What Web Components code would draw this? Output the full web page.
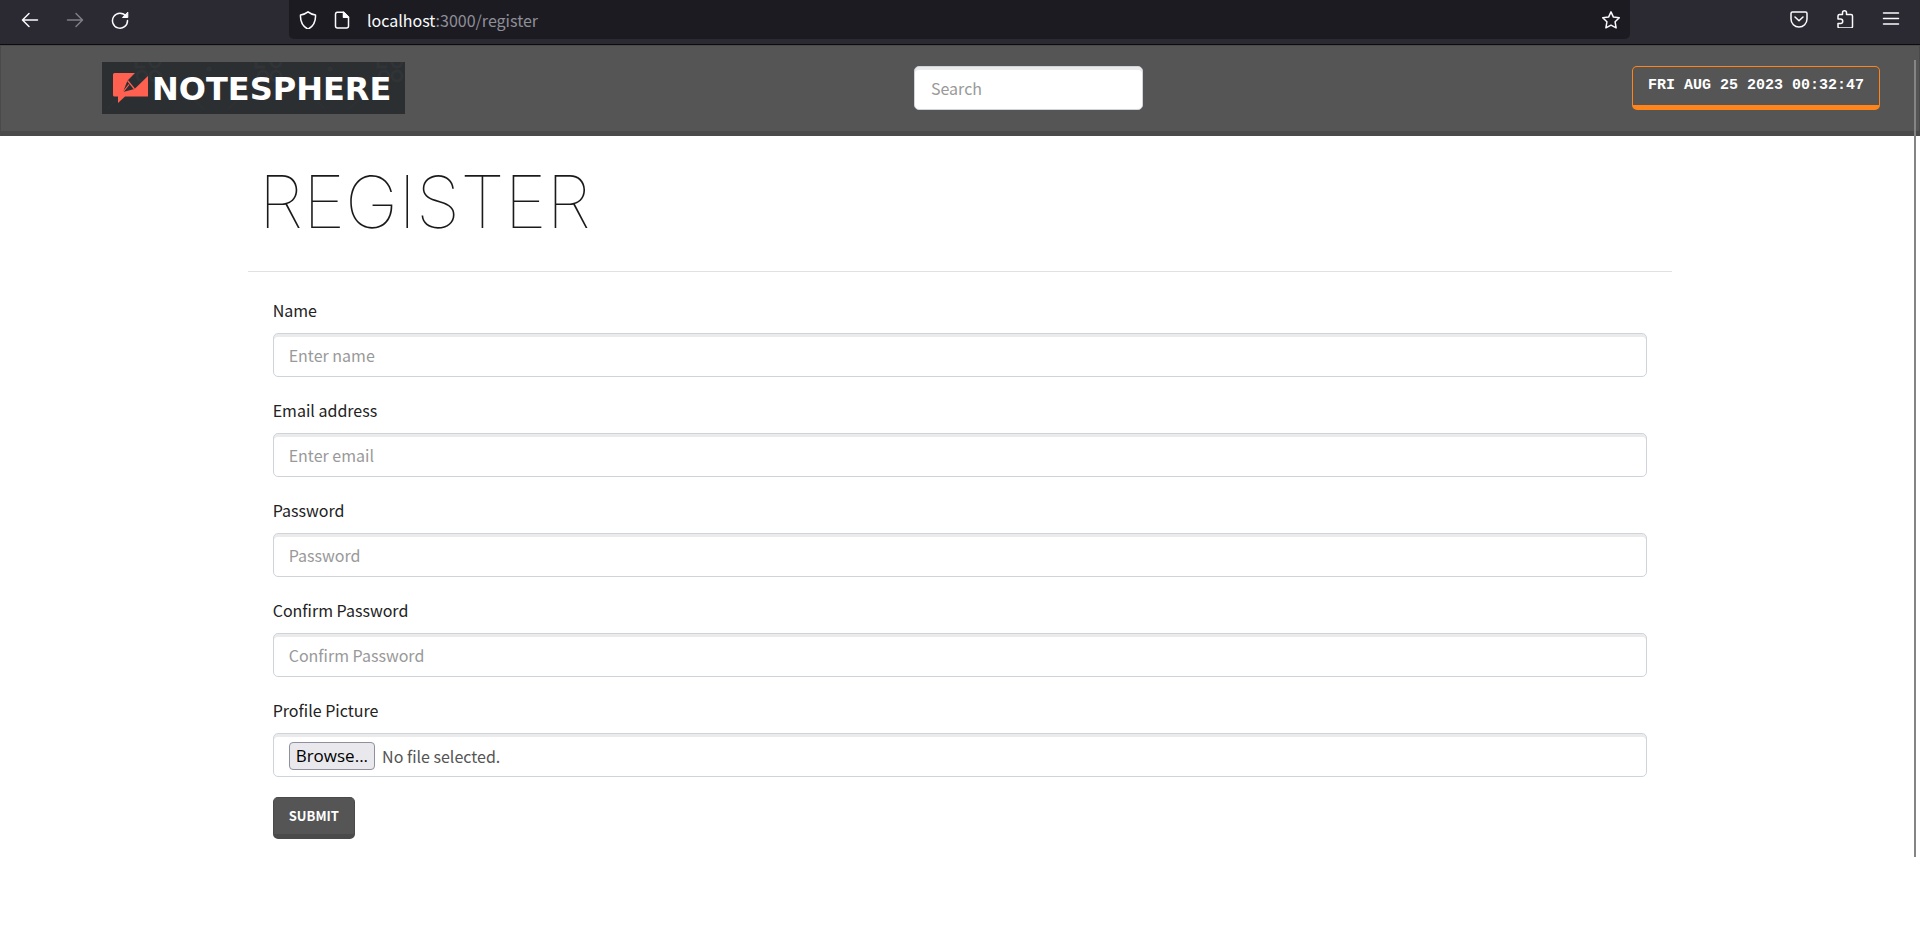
<!DOCTYPE html>
<html lang="en">
<head>
<meta charset="utf-8">
<title>NoteSphere – Register</title>
<style>
  html, body { margin: 0; min-height: 100%; background: #fff; }
  body { font: 16px/24px "Noto Sans CJK SC", "Noto Sans", sans-serif; color: #222; }
</style>
</head>
<body>
<note-app></note-app>

<template id="t-browser-bar">
  <style>
    :host { display: flex; align-items: flex-start; height: 44px; background: #2b2a33; border-bottom: 1px solid #0c0c0d; color: #fbfbfe; }
    button { all: unset; display: block; width: 18px; height: 18px; cursor: pointer; }
    button:disabled { opacity: .4; cursor: default; }
    svg { display: block; width: 18px; height: 18px; fill: none; stroke: currentColor; stroke-width: 1.5; stroke-linecap: round; stroke-linejoin: round; }
    nav { display: flex; gap: 27px; padding: 11px 0 0 21px; width: 268px; box-sizing: content-box; }
    nav.tools { width: auto; gap: 28px; padding: 10px 20px 0 160px; }
    .url { flex: 1; display: flex; align-items: center; gap: 16px; height: 39px; box-sizing: border-box; padding: 0 10px; background: #1c1b22; border-radius: 0 0 5px 5px; }
    .address { flex: 1; font: 16px/24px "Noto Sans CJK SC", sans-serif; color: #8f8f98; }
    .address b { font-weight: 400; color: #fbfbfe; }
  </style>
  <nav aria-label="History">
    <button aria-label="Back"><svg viewBox="0 0 18 18"><path d="M16.500 9H2M8 2.500 1.500 9 8 15.500"/></svg></button>
    <button aria-label="Forward" disabled><svg viewBox="0 0 18 18"><path d="M1.500 9H16M10 2.500 16.500 9 10 15.500"/></svg></button>
    <button aria-label="Reload"><svg viewBox="0 0 18 18"><path d="M15 5.200A7.500 7.500 0 1 0 16.500 9.500"/><path d="M16.800 1.500v5h-5z" fill="currentColor" stroke-width="1"/></svg></button>
  </nav>
  <div class="url">
    <svg viewBox="0 0 18 18"><path d="M9 .8c2.400 2 4.800 2.700 7.500 3.200C16.900 11 14 15.500 9 18.200 4 15.500 1.100 11 1.500 4 4.200 3.500 6.600 2.800 9 .8z"/></svg>
    <svg viewBox="0 0 18 18"><path d="M4 1.200h6.500l5 5V15a2 2 0 0 1-2 2h-9a2 2 0 0 1-2-2V3a2 2 0 0 1 1.500-1.800z"/><path d="M10.500 1.200v5h5z" fill="currentColor"/></svg>
    <span class="address"><b>localhost</b>:3000/register</span>
    <button aria-label="Bookmark this page"><svg viewBox="0 0 18 18"><path d="M9 .9l2.400 5.200 5.900.7-4.200 4 1 6L9 14.200l-5.100 2.600 1-6-4.200-4 5.900-.7z"/></svg></button>
  </div>
  <nav class="tools" aria-label="Tools">
    <button aria-label="Save to Pocket"><svg viewBox="0 0 18 18"><path d="M2.500 2h13A1.500 1.500 0 0 1 17 3.500V9A8 8 0 0 1 1 9V3.500A1.500 1.500 0 0 1 2.500 2zM5 7l4 3.800L13 7"/></svg></button>
    <button aria-label="Extensions"><svg viewBox="0 0 18 18"><path d="M2 7.500V6a1.500 1.500 0 0 1 1.500-1.500h3V2.800a2 2 0 0 1 4 0v1.700H15A1.500 1.500 0 0 1 16.500 6v10.500A1.500 1.500 0 0 1 15 18H3.500A1.500 1.500 0 0 1 2 16.500V13.500h2.500a2 2 0 0 0 0-4.500H2z"/></svg></button>
    <button aria-label="Menu"><svg viewBox="0 0 18 18"><path d="M1.500 3h15M1.500 8.500h15M1.500 14h15"/></svg></button>
  </nav>
</template>

<template id="t-note-logo">
  <style>
    :host { display: block; }
    a { position: relative; display: flex; align-items: center; gap: 3px; width: 303px; height: 52px; box-sizing: border-box; padding: 0 11px; background: #2b2f32; color: #fff; text-decoration: none; overflow: hidden; }
    .mark { position: relative; flex: none; width: 36px; height: 32px; }
    .pattern { position: absolute; inset: 0; }
    .name { position: relative; font: bold 32px/52px "DejaVu Sans", sans-serif; padding-top: 2px; }
  </style>
  <a href="#">
    <svg class="pattern" width="303" height="52" fill="none" stroke="#303437" stroke-width="3">
      <path d="M34 0v5h9M154 0v5h9M276 0v5h9"/>
      <path stroke-width="1" d="M5 47l15-14M87 33l15 14M126 47l15-14M208 33l15 14M247 47l15-14"/>
      <circle cx="53" cy="0" r="5"/><circle cx="174" cy="0" r="5"/><circle cx="295" cy="0" r="5"/>
      <circle cx="40" cy="14" r="5"/><circle cx="53" cy="14" r="5"/><circle cx="161" cy="14" r="5"/><circle cx="174" cy="14" r="5"/><circle cx="282" cy="14" r="5"/><circle cx="295" cy="14" r="5"/>
      <circle cx="107" cy="7" r="1"/><circle cx="228" cy="7" r="1"/>
    </svg>
    <svg class="mark" viewBox="0 0 36 32">
      <path fill="#ff6050" d="M1.500 1H22L14.500 8.500 10 20 21.500 17 35 4V24.500H12L5 31V24.500H1.500A1.500 1.500 0 0 1 0 23V2.500A1.500 1.500 0 0 1 1.500 1z"/>
      <path fill="none" stroke="#ff6050" stroke-width="1.200" d="M14.500 8.500 21.500 17M10 20 16 12.500"/>
    </svg>
    <span class="name">NOTESPHERE</span>
  </a>
</template>

<template id="t-note-header">
  <style>
    :host { display: flex; align-items: center; justify-content: space-between; height: 91px; box-sizing: border-box; padding: 0 39px 1px 101px; background: #555; border: 1px solid #4a4a4a; border-bottom-width: 5px; }
    note-logo { margin-right: 20px; }
    input, button { box-sizing: border-box; height: 44px; border-radius: 5px; }
    input { width: 229px; padding: 0 16px 1px; border: 1px solid #ced4da; background: #fff; box-shadow: inset 0 3px 0 #ebebeb; font: inherit; color: #555; }
    input::placeholder { color: #999; opacity: 1; }
    button { padding: 0 15px; border: 1px solid #ff851b; border-bottom-width: 5px; background: transparent; color: #fff; font: bold 15px/24px "Liberation Mono", monospace; text-transform: uppercase; }
  </style>
  <note-logo></note-logo>
  <input type="search" placeholder="Search" aria-label="Search">
  <button type="button">Fri Aug 25 2023 00:32:47</button>
</template>

<template id="t-note-field">
  <style>
    :host { display: block; margin-bottom: 20px; }
    label { display: block; margin-bottom: 10px; line-height: 26px; }
    input, .file { display: flex; align-items: center; box-sizing: border-box; width: 100%; height: 44px; padding: 0 15px 1px; border: 1px solid #ced4da; border-radius: 5px; background: #fff; box-shadow: inset 0 3px 0 #ebebeb; font: inherit; color: #555; }
    input::placeholder { color: #999; opacity: 1; }
    .file { gap: 7px; padding-top: 3px; }
    .file input { display: none; }
    .file button { height: 28px; padding: 0 6px; border: 1px solid #8f8f9d; border-radius: 4px; background: #e9e9ed; color: #000; font: 17px/24px "Open Sans", sans-serif; }
  </style>
  <label for="control"></label>
</template>

<template id="t-note-register">
  <style>
    :host { display: block; box-sizing: border-box; width: 74.200%; margin: 0 auto; }
    h1 { margin: 0; padding: 24px 11px 27px; font: 100 72px/84px Inter, sans-serif; color: #1a1a1a; border-bottom: 1px solid #e1e1e1; }
    form { padding: 25px 25px 0; }
    button { height: 42px; box-sizing: border-box; padding: 0 15px; border: 1px solid #4a4a4a; border-bottom-width: 5px; border-radius: 5px; background: #555; color: #fff; font: bold 13px/20px "Noto Sans CJK SC", sans-serif; text-transform: uppercase; }
  </style>
  <h1>REGISTER</h1>
  <form>
    <note-field label="Name" placeholder="Enter name"></note-field>
    <note-field label="Email address" type="email" placeholder="Enter email"></note-field>
    <note-field label="Password" type="password" placeholder="Password"></note-field>
    <note-field label="Confirm Password" type="password" placeholder="Confirm Password"></note-field>
    <note-field label="Profile Picture" type="file"></note-field>
    <button type="submit">Submit</button>
  </form>
</template>

<template id="t-note-app">
  <style>
    :host { display: block; }
    .scroll { position: fixed; top: 60px; right: 4px; width: 2px; height: 797px; background: #858585; }
  </style>
  <browser-bar></browser-bar>
  <note-header></note-header>
  <main><note-register></note-register></main>
  <div class="scroll"></div>
</template>

<script>
  class TemplateElement extends HTMLElement {
    constructor() {
      super();
      this.attachShadow({ mode: "open" })
        .append(document.getElementById("t-" + this.localName).content.cloneNode(true));
    }
  }
  class NoteField extends TemplateElement {
    connectedCallback() {
      const root = this.shadowRoot;
      if (root.getElementById("control")) return;
      root.querySelector("label").textContent = this.getAttribute("label");
      const input = document.createElement("input");
      input.type = this.getAttribute("type") || "text";
      input.id = "control";
      if (input.type !== "file") {
        input.placeholder = this.getAttribute("placeholder");
        root.append(input);
        return;
      }
      const box = document.createElement("div");
      box.className = "file";
      const browse = document.createElement("button");
      browse.type = "button";
      browse.textContent = "Browse...";
      const status = document.createElement("span");
      status.textContent = "No file selected.";
      browse.addEventListener("click", () => input.click());
      input.addEventListener("change", () => {
        status.textContent = input.files.length ? input.files[0].name : "No file selected.";
      });
      box.append(input, browse, status);
      root.append(box);
    }
  }
  customElements.define("browser-bar", class extends TemplateElement {});
  customElements.define("note-logo", class extends TemplateElement {});
  customElements.define("note-header", class extends TemplateElement {});
  customElements.define("note-field", NoteField);
  customElements.define("note-register", class extends TemplateElement {});
  customElements.define("note-app", class extends TemplateElement {});
</script>
</body>
</html>
